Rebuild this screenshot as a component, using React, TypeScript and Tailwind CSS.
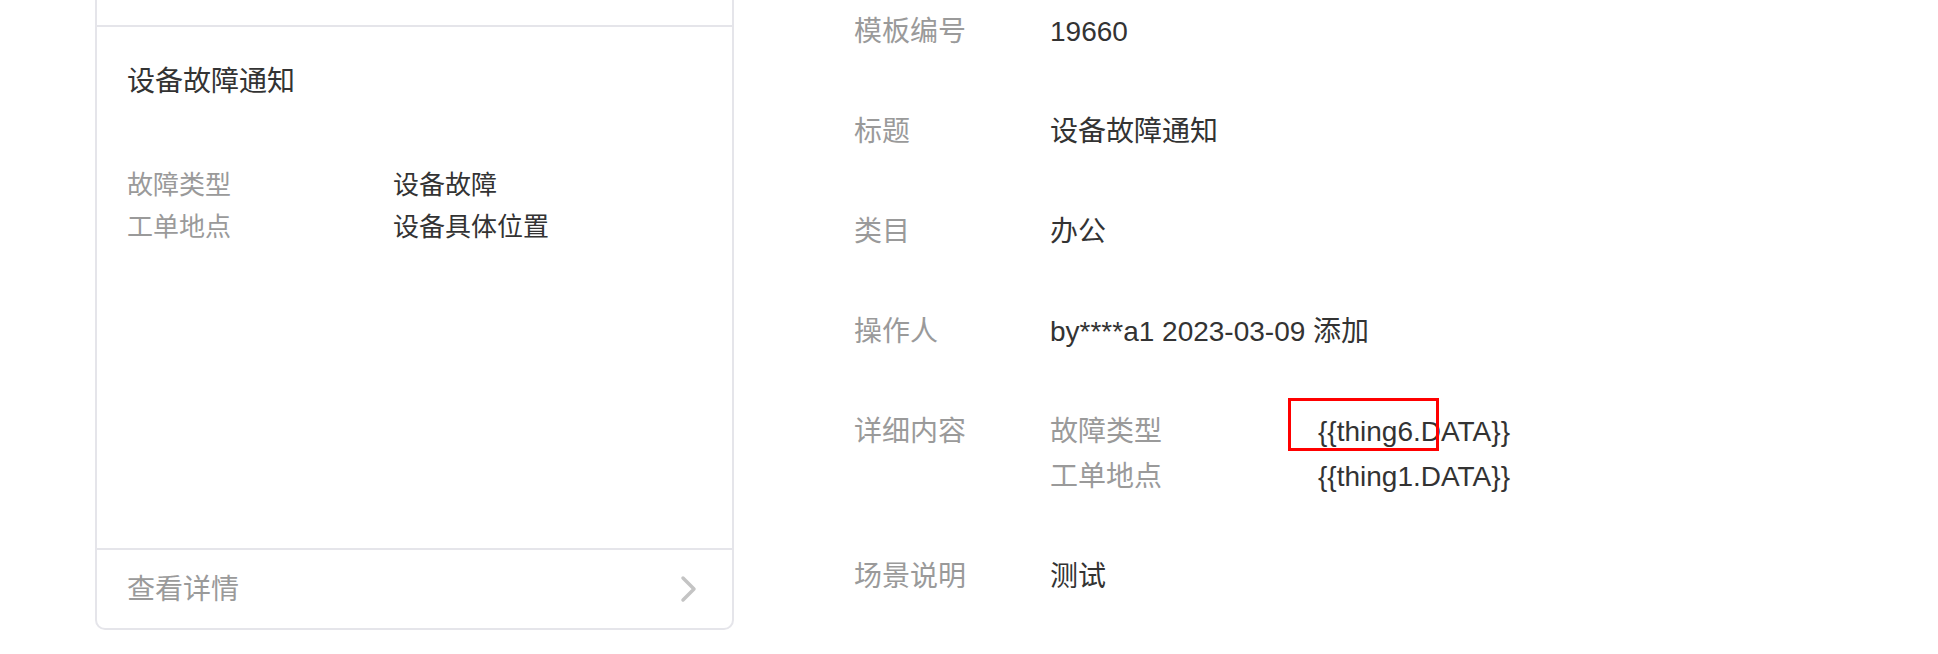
import React from "react";

const font = {
  fontFamily: '"Liberation Sans", "Noto Sans CJK SC", sans-serif',
};

function Chevron() {
  return (
    <svg width="18" height="28" viewBox="0 0 18 28" fill="none">
      <polyline
        points="3,3 14,14 3,25"
        stroke="#c4c4c4"
        strokeWidth="3.5"
        strokeLinecap="round"
        strokeLinejoin="round"
        fill="none"
      />
    </svg>
  );
}

function Card() {
  return (
    <div className="flex h-[630px] w-[639px] shrink-0 flex-col rounded-b-[10px] border-x-2 border-b-2 border-[#e5e5ea] bg-white">
      <div className="h-[27px] shrink-0 border-b-2 border-[#e5e5ea]" />
      <div className="flex-1 px-[30px] pt-[35px]">
        <div className="text-[28px] leading-[40px] text-[#333]">设备故障通知</div>
        <div className="mt-[62px] grid grid-cols-[266px_1fr] text-[26px] leading-[42px]">
          <div className="text-[#9a9a9a]">故障类型</div>
          <div className="text-[#333]">设备故障</div>
          <div className="text-[#9a9a9a]">工单地点</div>
          <div className="text-[#333]">设备具体位置</div>
        </div>
      </div>
      <div className="flex h-[80px] shrink-0 items-center justify-between border-t-2 border-[#e5e5ea] pl-[30px] pr-[34px]">
        <span className="pt-[2px] text-[28px] leading-[40px] text-[#9a9a9a]">查看详情</span>
        <Chevron />
      </div>
    </div>
  );
}

function Row({ label, children }: { label: string; children: React.ReactNode }) {
  return (
    <div className="flex text-[28px] leading-[45px]">
      <div className="w-[196px] shrink-0 text-[#9a9a9a]">{label}</div>
      <div className="text-[#333]">{children}</div>
    </div>
  );
}

export default function App() {
  return (
    <div className="relative h-[654px] w-full overflow-hidden bg-white" style={font}>
      <div className="flex pl-[95px]">
        <Card />
        <div className="ml-[120px] flex flex-col gap-[55px] pt-[9px]">
          <Row label="模板编号">19660</Row>
          <Row label="标题">设备故障通知</Row>
          <Row label="类目">办公</Row>
          <Row label="操作人">by****a1 2023-03-09 添加</Row>
          <Row label="详细内容">
            <div className="grid grid-cols-[268px_1fr]">
              <div className="text-[#9a9a9a]">故障类型</div>
              <div>{"{{thing6.DATA}}"}</div>
              <div className="text-[#9a9a9a]">工单地点</div>
              <div>{"{{thing1.DATA}}"}</div>
            </div>
          </Row>
          <Row label="场景说明">测试</Row>
        </div>
      </div>
      <div className="absolute left-[1288px] top-[398px] h-[53px] w-[151px] border-[3px] border-[#ff0000]" />
    </div>
  );
}
